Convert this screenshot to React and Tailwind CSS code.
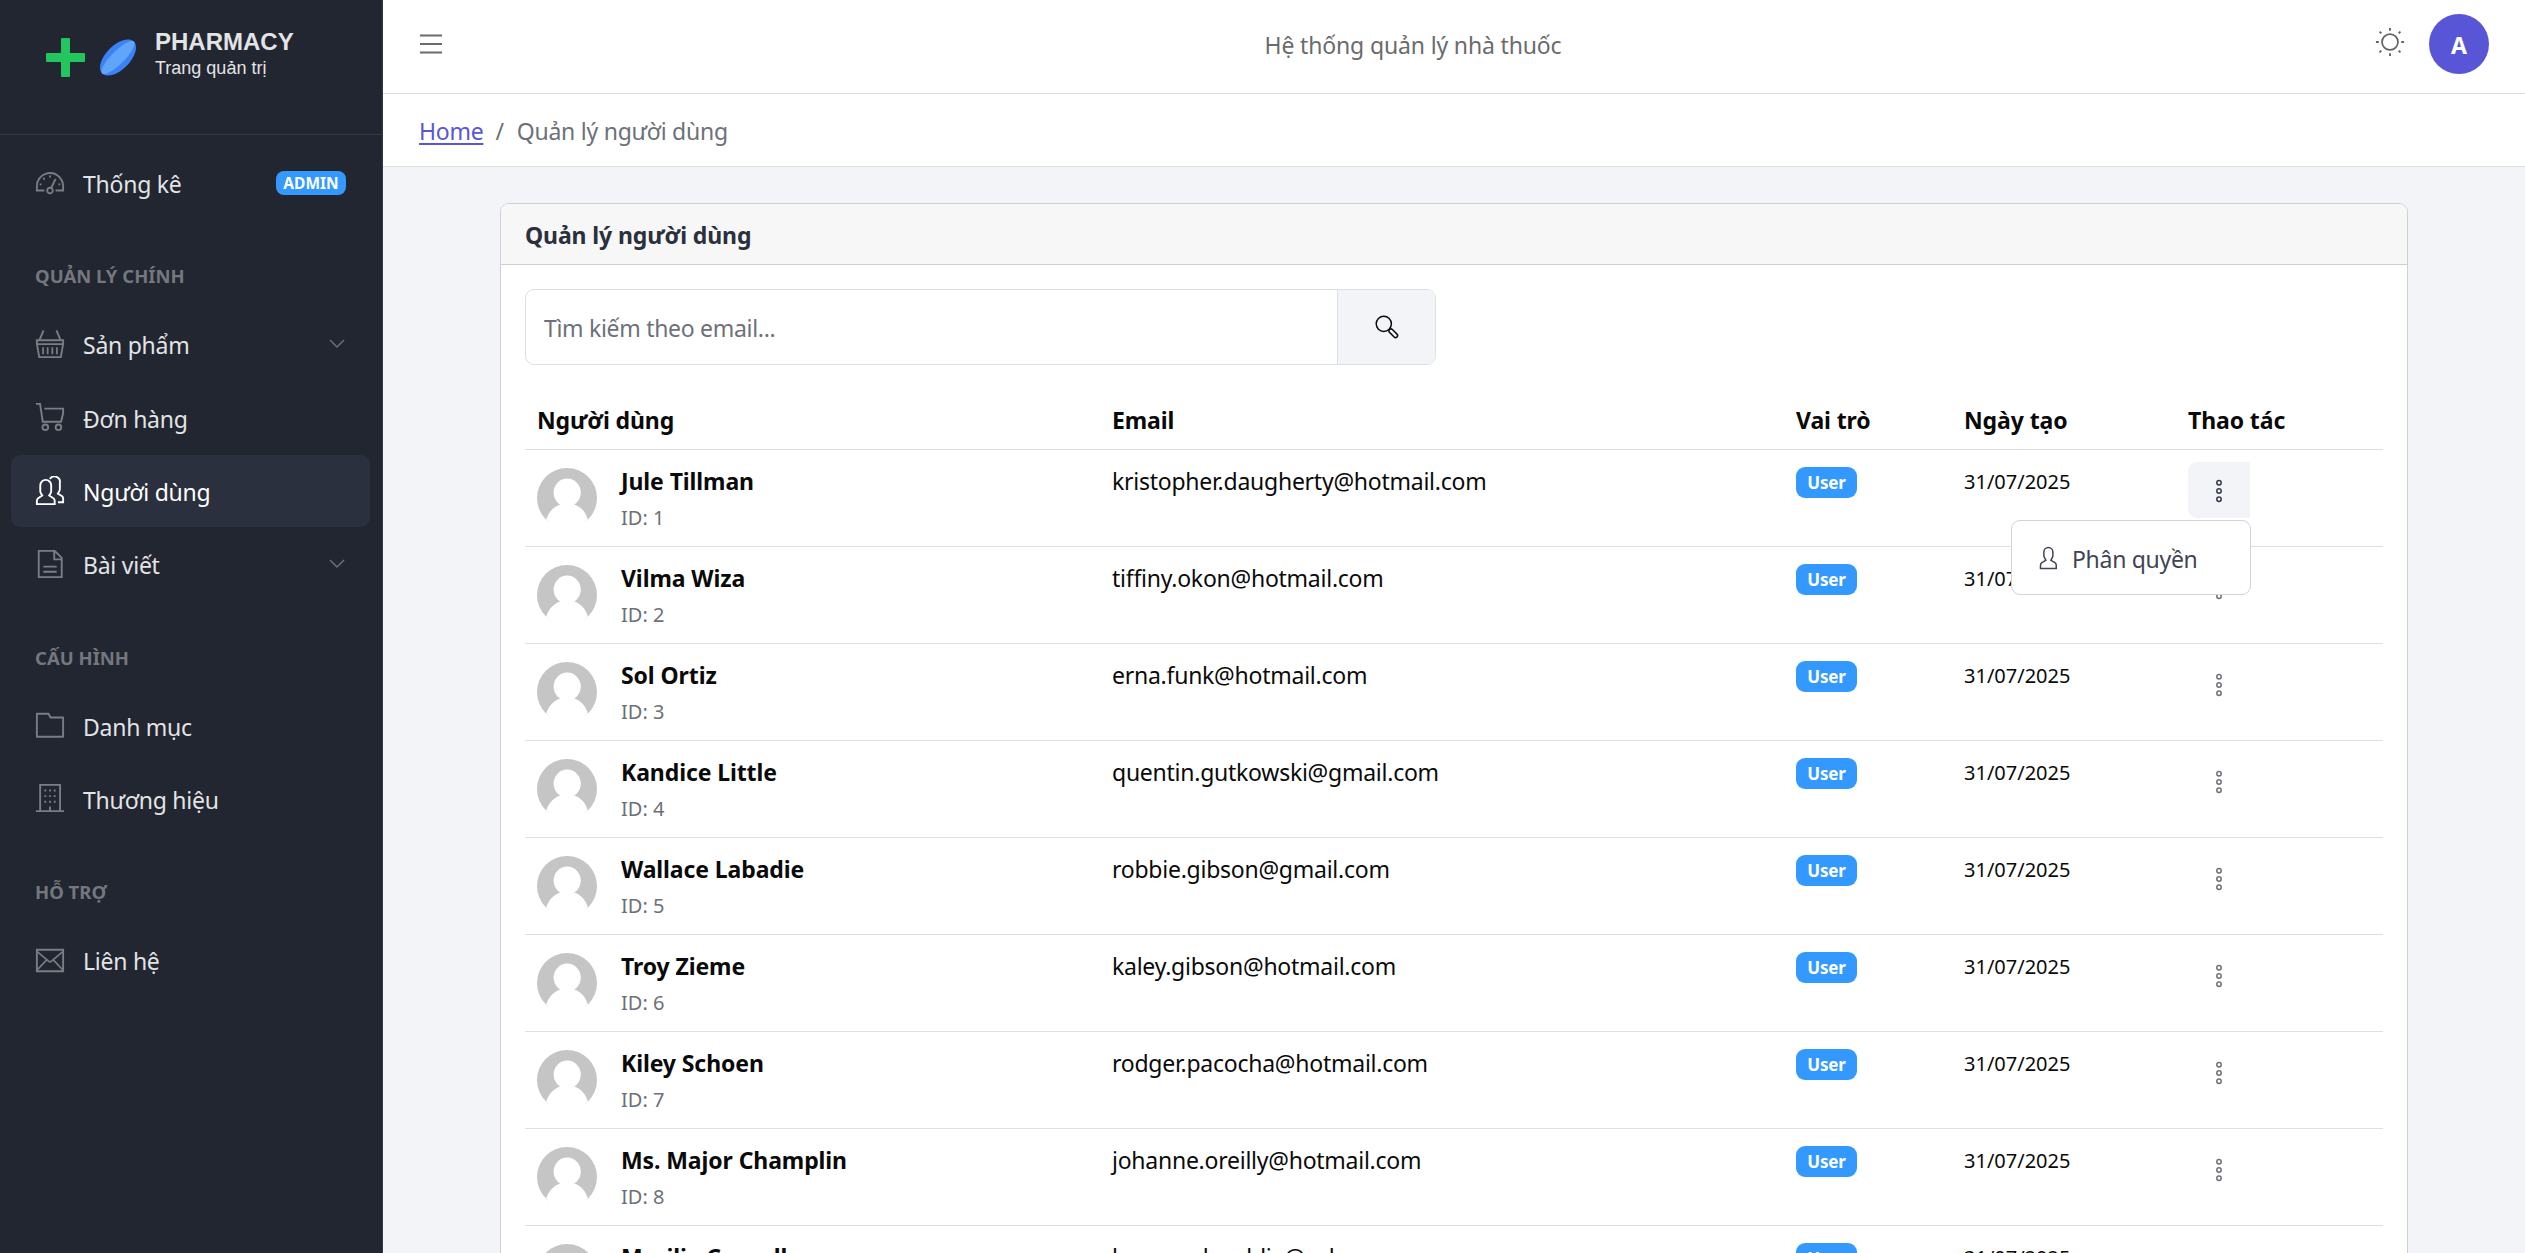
import React from "react";

/* ---------- icons (512 grid) ---------- */
function Icon({ className = "", children }) {
  return (
    <svg viewBox="0 0 512 512" className={`size-[30px] shrink-0 ${className}`} fill="none" stroke="currentColor" strokeWidth="32">
      {children}
    </svg>
  );
}

const Speedometer = () => (
  <Icon>
    <g fill="currentColor" stroke="none">
      <path d="M425.706,142.294A240,240,0,0,0,16,312v88H160V368H48V312c0-114.691,93.309-208,208-208s208,93.309,208,208v56H352v32H496V312A238.432,238.432,0,0,0,425.706,142.294Z" />
      <path d="M80 264h32v32H80zM240 128h32v32h-32zM136 168h32v32h-32zM400 264h32v32h-32z" />
      <path d="M297.222,335.1l69.2-144.173-28.85-13.848L268.389,321.214A64.141,64.141,0,1,0,297.222,335.1ZM256,416a32,32,0,1,1,32-32A32.036,32.036,0,0,1,256,416Z" />
    </g>
  </Icon>
);
const Basket = () => (
  <Icon>
    <path d="M32 192H480V256L440 480H72L32 256ZM32 258H480" />
    <path d="M146 22L76 190M366 22L436 190" />
    <path d="M138 310V432M216 310V432M296 310V432M374 310V432" strokeWidth="30" />
  </Icon>
);
const Cart = () => (
  <Icon>
    <path d="M16 32H86L133 336H445L480 193V112H160" />
    <circle cx="176" cy="432" r="48" />
    <circle cx="400" cy="432" r="48" />
  </Icon>
);
const People = () => (
  <Icon>
    <path d="M32 480V422a50 50 0 0 1 22-42L124 334 98 290Q90 275 90 258V160a93 93 0 0 1 186 0v98q0 17-8 32l-26 44 72 46a50 50 0 0 1 22 42V480Z" />
    <path d="M254 52A93 93 0 0 1 424 120V222q0 17-8 32l-26 46 68 42a50 50 0 0 1 22 42V448H392" />
  </Icon>
);
const Doc = () => (
  <Icon>
    <path d="M64 32H336L456 152V480H64ZM328 36V176H456M142 301H370M142 388H370" />
  </Icon>
);
const Folder = () => (
  <Icon>
    <path d="M32 64H232L264 128H480V456H32Z" strokeLinejoin="round" />
  </Icon>
);
const Building = () => (
  <Icon>
    <path d="M88 480V32H428V480M16 480H496M256 400V464" />
    <path d="M160 128h32M240 128h32M320 128h32M160 224h32M240 224h32M320 224h32M160 320h32M240 320h32M320 320h32" />
  </Icon>
);
const Envelope = () => (
  <Icon>
    <path d="M32 80H480V448H32Z" />
    <path d="M32 108L230 276Q256 298 282 276L480 108M32 430L192 262M480 430L320 262" strokeWidth="28" />
  </Icon>
);
const Chevron = () => (
  <svg viewBox="0 0 16 10" className="ml-auto mr-px h-[10px] w-4 text-[#6b6f79]" fill="none" stroke="currentColor" strokeWidth="1.5">
    <path d="M1 1L8 8L15 1" />
  </svg>
);
const UserIcon = () => (
  <svg viewBox="0 0 512 512" className="size-6 shrink-0" fill="currentColor">
    <path d="M411.6,343.656l-72.823-47.334,27.455-50.334A80.23,80.23,0,0,0,376,207.681V128a112,112,0,0,0-224,0v79.681a80.236,80.236,0,0,0,9.768,38.308l27.455,50.333L116.4,343.656A79.725,79.725,0,0,0,80,410.732V496H448V410.732A79.727,79.727,0,0,0,411.6,343.656ZM416,464H112V410.732a47.836,47.836,0,0,1,21.841-40.246l97.66-63.479-41.64-76.341A48.146,48.146,0,0,1,184,207.681V128a80,80,0,0,1,160,0v79.681a48.146,48.146,0,0,1-5.861,22.985L296.5,307.007l97.662,63.479h0A47.836,47.836,0,0,1,416,410.732Z" />
  </svg>
);
const Options = () => (
  <svg viewBox="0 0 24 24" className="mt-[2px] size-6" fill="none" stroke="currentColor" strokeWidth="1.5">
    <circle cx="12" cy="3.8" r="2.2" />
    <circle cx="12" cy="12" r="2.2" />
    <circle cx="12" cy="20.2" r="2.2" />
  </svg>
);
const Sun = () => (
  <Icon className="text-[#636363]">
    <circle cx="256" cy="256" r="136" strokeWidth="30" />
    <path d="M256 16V64M256 448V496M16 256H64M448 256H496M78 78L108 108M404 404L434 434M78 434L108 404M404 108L434 78" strokeWidth="32" />
  </Icon>
);
const Menu = () => (
  <svg viewBox="0 0 22 22" className="size-[22px] text-[#6b6b6b]" stroke="currentColor" strokeWidth="2">
    <path d="M0 2.5H22M0 11H22M0 19.5H22" />
  </svg>
);
const Search = () => (
  <svg viewBox="0 0 24 24" className="size-6 text-[#0a0a0a]" fill="none" stroke="currentColor" strokeWidth="1.5">
    <circle cx="8.8" cy="8.8" r="7.6" />
    <g transform="translate(14.2 14.2) rotate(45)">
      <rect x="0.5" y="-2" width="10.500" height="4" rx="2" />
    </g>
  </svg>
);
const Avatar = () => (
  <svg viewBox="0 0 60 60" className="size-[60px] shrink-0">
    <defs>
      <clipPath id="round">
        <circle cx="30" cy="30" r="30" />
      </clipPath>
    </defs>
    <g clipPath="url(#round)">
      <path d="M0 0H60V54H0Z" fill="#c5c5c5" />
      <ellipse cx="30.2" cy="24.6" rx="13.6" ry="14" fill="#fff" />
      <path d="M9 52C12 43 17.500 38 24 36.200H36.500C43 38 48.500 43 51 52L56 60H4Z" fill="#fff" />
    </g>
  </svg>
);

/* ---------- sidebar ---------- */
function NavItem({ icon, label, active, children }) {
  return (
    <li className="h-[73.33px]">
      <a className={`ml-[11px] flex h-[72px] w-[359px] items-center rounded-[9px] pl-6 pr-6 ${active ? "bg-[#2a303d] text-white" : "text-[#e3e4e5]"}`}>
        <span className={`mr-[18px] ${active ? "text-white" : "-mt-px text-[#7a7d84]"}`}>{icon}</span>
        <span className="pt-[2px] tracking-[-0.25px]">{label}</span>
        {children}
      </a>
    </li>
  );
}
const NavTitle = ({ children }) => (
  <li className="h-[88px] pl-[35px] pt-[42px] text-[18.5px]/[28px] font-bold text-[#74777e]">{children}</li>
);

function Sidebar() {
  return (
    <aside className="h-full w-[383px] shrink-0 border-r border-[#323a49] bg-[#212631]">
      <div className="flex h-[135px] border-b border-[#323a49] font-['Liberation_Sans',Arial,sans-serif] text-[#e3e4e5]">
        <svg viewBox="0 0 100 50" className="ml-[43px] mt-[33px] h-[50px] w-[100px]">
          <rect x="18" y="5" width="9" height="39" rx="1" fill="#22c55e" />
          <rect x="3" y="20" width="39" height="9" rx="1" fill="#22c55e" />
          <g transform="rotate(-45 75 24.500)">
            <ellipse cx="75" cy="24.500" rx="22.500" ry="12" fill="#3b82f6" />
            <ellipse cx="75" cy="24.500" rx="22.500" ry="6.500" fill="#60a5fa" />
          </g>
        </svg>
        <div className="ml-[12px] pt-7">
          <div className="text-[24px]/[27px] font-bold">PHARMACY</div>
          <div className="text-[18px]/[27px]">Trang quản trị</div>
        </div>
      </div>
      <ul className="pt-3">
        <NavItem icon={<Speedometer />} label="Thống kê">
          <span className="ml-auto flex h-6 w-[70px] items-center justify-center rounded-[8px] bg-[#39f] text-[15.5px] font-bold text-white">ADMIN</span>
        </NavItem>
        <NavTitle>QUẢN LÝ CHÍNH</NavTitle>
        <NavItem icon={<Basket />} label="Sản phẩm"><Chevron /></NavItem>
        <NavItem icon={<Cart />} label="Đơn hàng" />
        <NavItem icon={<People />} label="Người dùng" active />
        <NavItem icon={<Doc />} label="Bài viết"><Chevron /></NavItem>
        <NavTitle>CẤU HÌNH</NavTitle>
        <NavItem icon={<Folder />} label="Danh mục" />
        <NavItem icon={<Building />} label="Thương hiệu" />
        <NavTitle>HỖ TRỢ</NavTitle>
        <NavItem icon={<Envelope />} label="Liên hệ" />
      </ul>
    </aside>
  );
}

/* ---------- table ---------- */
const users = [
  ["Jule Tillman", "kristopher.daugherty@hotmail.com"],
  ["Vilma Wiza", "tiffiny.okon@hotmail.com"],
  ["Sol Ortiz", "erna.funk@hotmail.com"],
  ["Kandice Little", "quentin.gutkowski@gmail.com"],
  ["Wallace Labadie", "robbie.gibson@gmail.com"],
  ["Troy Zieme", "kaley.gibson@hotmail.com"],
  ["Kiley Schoen", "rodger.pacocha@hotmail.com"],
  ["Ms. Major Champlin", "johanne.oreilly@hotmail.com"],
  ["Marilie Cornell", "harmon.braddie@yahoo.com"],
];

const cols = "grid grid-cols-[575px_684px_168px_224px_207px] border-b border-[#dbdfe6]";

function Row({ id, name, email, open }) {
  return (
    <div className={`${cols} h-[97px]`}>
      <div className="flex items-start gap-6 pl-3 pt-[18px]">
        <Avatar />
        <div className="-mt-[5px]">
          <div className="h-[37px] font-bold tracking-[-0.1px]">{name}</div>
          <div className="text-[20px]/[36px] text-[#6d7079]">ID: {id}</div>
        </div>
      </div>
      <div className="pl-3 pt-[13px] tracking-[-0.25px]">{email}</div>
      <div className="pl-3 pt-[17px]">
        <span className="flex h-[31px] w-[61px] items-center justify-center rounded-[9px] bg-[#39f] pt-px text-[17px] font-bold tracking-[-0.2px] text-white">User</span>
      </div>
      <div className="pl-3 pt-[14px] text-[20px]/[36px]">31/07/2025</div>
      <div className="relative pl-3 pt-3">
        <button className={`flex h-[56px] w-[62px] items-center justify-center rounded-l-[9px] ${open ? "bg-[#f3f4f7] text-[#323a49]" : "text-[#6d7079]"}`}>
          <Options />
        </button>
        {open && (
          <div className="absolute right-[132px] top-[70px] z-10 flex h-[75px] w-[240px] items-center rounded-[9px] border border-[#d3d4d8] bg-white pl-6 text-[#3f4553]">
            <UserIcon />
            <span className="ml-3 pt-[3px] tracking-[-0.3px]">Phân quyền</span>
          </div>
        )}
      </div>
    </div>
  );
}

export default function App() {
  return (
    <div className="flex h-[1253px] w-[2525px] overflow-hidden bg-[#f3f4f7] font-['Noto_Sans','Open_Sans',sans-serif] text-[23px]/[36px] text-[#0a0a0a]">
      <Sidebar />
      <div className="min-w-0 flex-1">
        <header className="flex h-[94px] items-center justify-between border-b border-[#dbdfe0] bg-white pl-[37px] pr-9">
          <div className="w-[120px] pb-[6px]">
            <Menu />
          </div>
          <div className="mr-[89px] pb-[3px] tracking-[-0.15px] text-[#6b6b6b]">Hệ thống quản lý nhà thuốc</div>
          <div className="flex items-center gap-6 pb-[6px]">
            <span className="-mt-1"><Sun /></span>
            <span className="flex size-[60px] items-center justify-center rounded-full bg-[#5856d6] pt-[3px] font-bold text-white">A</span>
          </div>
        </header>
        <nav className="flex h-[73px] items-center border-b border-[#dbdfe6] bg-white pl-9 pt-[2px] tracking-[-0.25px] text-[#6d7079]">
          <a className="text-[#5856d6] underline decoration-2 underline-offset-[3px]">Home</a>
          <span className="pl-3 pr-[13px]">/</span>
          <span>Quản lý người dùng</span>
        </nav>
        <main className="ml-[117px] mt-9 w-[1908px] overflow-hidden rounded-t-[9px] border border-[#cfd0d4] bg-white">
          <h1 className="flex h-[61px] items-center border-b border-[#cfd0d4] bg-[#f7f7f7] pl-6 pt-[2px] font-bold tracking-[-0.1px] text-[#2a303d]">Quản lý người dùng</h1>
          <div className="px-6 pt-6">
            <div className="flex h-[76px] w-[911px] overflow-hidden rounded-[9px] border border-[#dbdfe6]">
              <div className="flex flex-1 items-center pl-[18px] pt-[2px] tracking-[-0.3px] text-[#6d7079]">Tìm kiếm theo email...</div>
              <button className="flex w-[98px] items-center justify-center border-l border-[#dbdfe6] bg-[#f3f4f7]">
                <Search />
              </button>
            </div>
            <div className="mt-6">
              <div className={`${cols} h-[61px] pt-[13px] font-bold tracking-[-0.1px]`}>
                {["Người dùng", "Email", "Vai trò", "Ngày tạo", "Thao tác"].map((h) => (
                  <div key={h} className="pl-3">{h}</div>
                ))}
              </div>
              {users.map(([name, email], i) => (
                <Row key={name} id={i + 1} name={name} email={email} open={i === 0} />
              ))}
            </div>
          </div>
        </main>
      </div>
    </div>
  );
}
